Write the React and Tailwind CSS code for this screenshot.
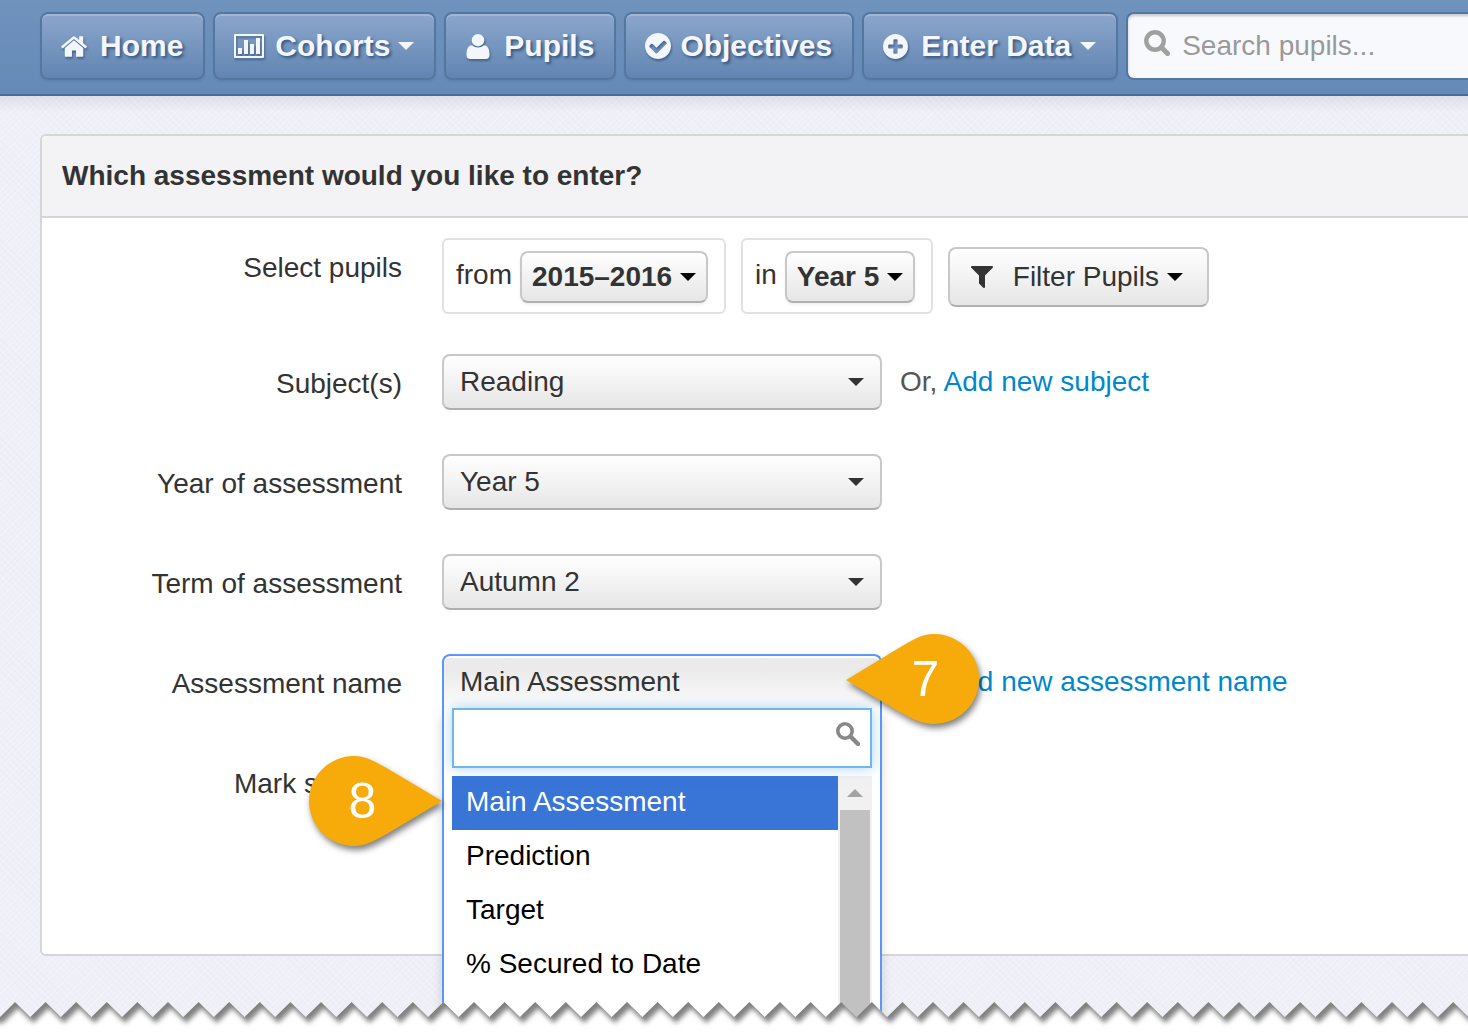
import React, { useState } from 'react';

const icons = {
  home: 'M1408 992v480q0 26-19 45t-45 19h-384v-384h-256v384h-384q-26 0-45-19t-19-45v-480q0-1 .5-3t.5-3l575-474 575 474q1 2 1 6zm223-69l-62 74q-8 9-21 11h-3q-13 0-21-7l-692-577-692 577q-12 8-24 7-13-2-21-11l-62-74q-8-10-7-23.5t11-21.5l719-599q32-26 76-26t76 26l244 204v-195q0-14 9-23t23-9h192q14 0 23 9t9 23v408l219 182q10 8 11 21.5t-7 23.5z',
  check: 'M1412 734q0-28-18-46l-91-90q-19-19-45-19t-45 19l-408 407-226-226q-19-19-45-19t-45 19l-91 90q-18 18-18 46 0 27 18 45l362 362q19 19 45 19 27 0 46-19l543-543q18-18 18-45zm252 162q0 209-103 385.5t-279.5 279.5-385.5 103-385.5-103-279.5-279.5-103-385.5 103-385.5 279.5-279.5 385.5-103 385.5 103 279.5 279.5 103 385.5z',
  plus: 'M1344 960v-128q0-26-19-45t-45-19h-256v-256q0-26-19-45t-45-19h-128q-26 0-45 19t-19 45v256h-256q-26 0-45 19t-19 45v128q0 26 19 45t45 19h256v256q0 26 19 45t45 19h128q26 0 45-19t19-45v-256h256q26 0 45-19t19-45zm320-64q0 209-103 385.5t-279.5 279.5-385.5 103-385.5-103-279.5-279.5-103-385.5 103-385.5 279.5-279.5 385.5-103 385.5 103 279.5 279.5 103 385.5z',
  filter: 'M1595 295q17 41-14 70l-493 493v742q0 42-39 59-13 5-25 5-27 0-45-19l-256-256q-19-18-19-45v-486l-493-493q-31-29-14-70 17-39 59-39h1280q42 0 59 39z',
};

const Icon = ({ name, box, className }) => (
  <svg viewBox={box} className={className} fill="currentColor" aria-hidden="true">
    <path d={icons[name]} />
  </svg>
);

const SearchIcon = ({ className }) => (
  <svg viewBox="0 0 26 26" className={className} fill="none" stroke="currentColor" aria-hidden="true">
    <circle cx="11" cy="11" r="8.700" strokeWidth="4.400" />
    <path d="M17.500 17.500L23.500 23.500" strokeWidth="5" strokeLinecap="round" />
  </svg>
);

const GlassIcon = ({ className }) => (
  <svg viewBox="0 0 24 24" className={className} fill="none" stroke="currentColor" aria-hidden="true">
    <circle cx="9" cy="9" r="7.200" strokeWidth="3.600" />
    <path d="M14.500 14.500L22 22" strokeWidth="4.400" strokeLinecap="round" />
  </svg>
);

const ChartIcon = () => (
  <svg viewBox="0 0 30 24" className="w-[30px] h-6 mr-[11px] drop-shadow-[1px_2px_1px_rgba(40,70,110,0.6)]" fill="currentColor" aria-hidden="true">
    <path fillRule="evenodd" d="M1 0h28q1 0 1 1v22q0 1-1 1H1q-1 0-1-1V1q0-1 1-1zM2 2v20h26V2z" />
    <path d="M4 14h4v6H4zM10 6h4v14h-4zM16 10h4v10h-4zM22 4h4v16h-4z" />
  </svg>
);

const UserIcon = () => (
  <svg viewBox="0 0 24 25" className="w-6 h-[25px] ml-px mr-[14px] drop-shadow-[1px_2px_1px_rgba(40,70,110,0.6)]" fill="currentColor" aria-hidden="true">
    <circle cx="12" cy="6.2" r="6.2" />
    <path d="M6 11.2C3 11.4 .5 14 .5 20v1.200Q.5 25 4.500 25h15q4 0 4-3.800V20c0-6-2.500-8.600-5.500-8.800Q15.500 13.600 12 13.600T6 11.200z" />
  </svg>
);

const Caret = ({ className = '' }) => (
  <span className={`w-0 h-0 border-x-8 border-x-transparent border-t-8 ${className}`} />
);

const NavButton = ({ children }) => (
  <button
    type="button"
    className="flex shrink-0 items-center h-[68px] pl-[19px] pr-5 rounded-lg border-2 border-[#54779f] bg-linear-to-b from-[#8ba6cc] to-[#6185b1] text-[30px] leading-none font-bold text-[#f3f7fc] shadow-[inset_0_2px_0_rgba(255,255,255,0.2),0_2px_2px_rgba(0,0,0,0.06)] [text-shadow:2px_2px_3px_rgba(40,70,110,0.8)]"
  >
    {children}
  </button>
);

const Header = () => (
  <header className="relative h-24 flex items-start gap-2 pl-10 pt-3 overflow-hidden border-b-2 border-[#466c9b] bg-linear-to-b from-[#7093bd] to-[#658ab7]">
    <nav className="flex gap-2 shrink-0">
      <NavButton>
        <Icon name="home" box="20 250 1624 1290" className="w-[26px] h-[21px] mr-[13px] drop-shadow-[1px_2px_1px_rgba(40,70,110,0.6)]" />
        Home
      </NavButton>
      <NavButton>
        <ChartIcon />
        Cohorts
        <Caret className="ml-2 border-t-[#f3f7fc]" />
      </NavButton>
      <NavButton>
        <UserIcon />
        Pupils
      </NavButton>
      <NavButton>
        <Icon name="check" box="128 128 1536 1536" className="w-[26px] h-[26px] mr-[9px] drop-shadow-[1px_2px_1px_rgba(40,70,110,0.6)]" />
        Objectives
      </NavButton>
      <NavButton>
        <Icon name="plus" box="128 128 1536 1536" className="w-[25px] h-[25px] mr-[13px] drop-shadow-[1px_2px_1px_rgba(40,70,110,0.6)]" />
        Enter Data
        <Caret className="ml-[9px] border-t-[#f3f7fc]" />
      </NavButton>
    </nav>
    <div className="relative grow min-w-[345px]">
      <SearchIcon className="absolute left-[18px] top-[18px] w-[26px] h-[26px] text-[#a0a0a0]" />
      <input
        type="text"
        aria-label="Search pupils"
        placeholder="Search pupils..."
        className="w-full h-[68px] pl-[54px] rounded-l-lg border-2 border-r-0 border-[#54779f] bg-[#f8f9fd] text-[28px] placeholder:text-[#999] outline-none shadow-[inset_0_2px_3px_rgba(0,0,0,0.2)]"
      />
    </div>
  </header>
);

const buttonLook = 'rounded-lg border-2 border-[#c8c8c8] border-b-[#b0b0b0] bg-linear-to-b from-white to-[#e6e6e6] text-[#333]';

const Select = ({ id, options, label }) => (
  <div className="relative w-[440px]">
    <select id={id} aria-label={label} className={`appearance-none w-full h-14 pl-4 text-[28px] ${buttonLook}`}>
      {options.map((option) => <option key={option}>{option}</option>)}
    </select>
    <Caret className="absolute right-[18px] top-6 pointer-events-none border-t-[#333]" />
  </div>
);

const SmallSelect = ({ id, text, label, options, width }) => (
  <div className="flex items-center gap-2 h-[76px] pl-3 pr-4 rounded-md border-2 border-[#e1e1e1]">
    <span className="pb-[2px]">{text}</span>
    <div className="relative">
      <select id={id} aria-label={label} className={`appearance-none block h-[52px] pl-[10px] mt-[2px] text-[28px] font-bold shadow-[0_2px_3px_rgba(0,0,0,0.06)] ${width} ${buttonLook}`}>
        {options.map((option) => <option key={option}>{option}</option>)}
      </select>
      <Caret className="absolute right-3 top-6 pointer-events-none border-t-black" />
    </div>
  </div>
);

const Row = ({ label, id, children }) => (
  <div className="flex items-start gap-10 mb-10">
    <label htmlFor={id} className="w-[360px] shrink-0 text-right leading-[60px]">{label}</label>
    {children}
  </div>
);

const Marker = ({ number, pointsLeft, className }) => (
  <div className={`absolute z-20 w-[133px] h-[90px] pointer-events-none ${className}`}>
    <svg viewBox="0 0 133 90" className="absolute inset-0 overflow-visible drop-shadow-[2px_4px_3px_rgba(0,0,0,0.5)]" fill="#f7ab0a" aria-hidden="true">
      {pointsLeft ? (
        <path d="M0 46L52 14.500C66 6 76 0 88 0A45 45 0 0 1 88 90C76 90 66 85 52 77z" />
      ) : (
        <path d="M133 45L81 14C67 6 57 0 45 0A45 45 0 0 0 45 90C57 90 67 84 81 76z" />
      )}
    </svg>
    <span className={`relative block text-center text-[50px] leading-[90px] text-white ${pointsLeft ? 'pl-[26px]' : 'pr-[26px]'}`}>{number}</span>
  </div>
);

const assessments = ['Main Assessment', 'Prediction', 'Target', '% Secured to Date'];

const AssessmentPicker = () => {
  const [selected, setSelected] = useState('Main Assessment');
  const [query, setQuery] = useState('');
  const visible = assessments.filter((name) => name.toLowerCase().includes(query.toLowerCase()));

  return (
    <div className="relative w-[440px]">
      <button
        id="assessment"
        type="button"
        aria-expanded="true"
        className="block w-full h-14 pl-4 pb-[3px] text-left rounded-t-lg border-2 border-b-0 border-[#5897fb] bg-linear-to-b from-[#ebebeb] from-30% to-white text-[#333] shadow-[inset_0_2px_0_#fff]"
      >
        {selected}
      </button>
      <div className="absolute z-10 left-0 top-[54px] w-full h-[420px] px-2 border-x-2 border-[#5897fb] bg-white shadow-[0_8px_10px_rgba(0,0,0,0.15)]">
        <div className="relative mb-2">
          <input
            type="text"
            aria-label="Search assessments"
            value={query}
            onChange={(e) => setQuery(e.target.value)}
            className="block w-full h-[60px] pl-3 pr-12 border-2 border-[#70b7ee] bg-white outline-none shadow-[0_0_12px_rgba(82,168,236,0.5)]"
          />
          <GlassIcon className="absolute right-3 top-[14px] w-6 h-6 text-[#888]" />
        </div>
        <div className="flex h-[350px]">
          <ul className="grow text-black">
            {visible.map((name) => (
              <li key={name}>
                <button
                  type="button"
                  onClick={() => setSelected(name)}
                  className={`block w-full h-[54px] pl-[14px] pb-[3px] text-left ${name === selected ? 'bg-[#3875d7] text-white' : ''}`}
                >
                  {name}
                </button>
              </li>
            ))}
          </ul>
          <div className="w-[34px] px-[2px] bg-[#f1f1f1]">
            <div className="h-[34px] flex items-center justify-center">
              <span className="w-0 h-0 border-x-8 border-x-transparent border-b-8 border-b-[#a3a3a3]" />
            </div>
            <div className="h-[316px] bg-[#c1c1c1]" />
          </div>
        </div>
      </div>
      <Marker number="7" pointsLeft className="left-[404px] -top-5" />
      <Marker number="8" className="-left-[133px] top-[102px]" />
    </div>
  );
};

const toothWidth = 30.6;
const toothCount = 100;

// zigzag running left to right, first peak at x = 15
const zigzag = Array.from({ length: toothCount }, (_, i) => {
  const peak = 15 + i * toothWidth;
  return `L${peak} 2L${peak + toothWidth / 2} 17`;
}).join('');

const TornEdge = () => (
  <svg className="absolute z-30 bottom-0 left-0 w-full h-8 pointer-events-none" aria-hidden="true">
    <defs>
      <clipPath id="paper">
        <path d={`M0 17${zigzag}V32H0z`} />
      </clipPath>
      <filter id="soft" x="-1%" y="-50%" width="102%" height="200%">
        <feGaussianBlur stdDeviation="2.500" />
      </filter>
    </defs>
    <g clipPath="url(#paper)">
      <rect width="100%" height="32" fill="#fff" />
      <path d={`M-30 -20V17L0 17${zigzag}V-20z`} transform="translate(3 6)" fill="#808080" filter="url(#soft)" />
    </g>
  </svg>
);

export default function App() {
  return (
    <div className="relative min-h-screen overflow-hidden bg-[#efeff8] bg-[repeating-linear-gradient(45deg,rgba(120,120,150,0.025)_0_1px,transparent_1px_5px),repeating-linear-gradient(-45deg,rgba(255,255,255,0.2)_0_1px,transparent_1px_4px)] font-['Liberation_Sans',Arial,sans-serif] text-[28px] leading-9 text-[#333]">
      <Header />
      <main className="pl-10 pt-[38px] bg-[linear-gradient(to_bottom,rgba(100,100,130,0.12),transparent_16px)]">
        <section className="rounded-l-md border-2 border-r-0 border-[#d6d6d6] bg-white">
          <h1 className="h-[82px] pl-5 rounded-tl-md border-b-2 border-[#d6d6d6] bg-[#f3f3f5] font-bold leading-[80px]">
            Which assessment would you like to enter?
          </h1>
          <form className="pt-5 pb-25">
            <Row label="Select pupils" id="school-year">
              <div className="flex items-center gap-[15px]">
                <SmallSelect id="school-year" text="from" options={['2015–2016']} width="w-[188px]" />
                <SmallSelect text="in" label="Year group" options={['Year 5']} width="w-[130px]" />
                <button type="button" className={`flex items-center h-[60px] mt-[2px] pl-[21px] pr-6 ${buttonLook}`}>
                  <Icon name="filter" box="192 256 1408 1408" className="w-[22px] h-[22px] mr-5" />
                  Filter Pupils
                  <Caret className="ml-2 border-t-black" />
                </button>
              </div>
            </Row>
            <Row label="Subject(s)" id="subject">
              <div className="flex items-center gap-[18px]">
                <Select id="subject" options={['Reading']} />
                <p className="text-[#555]">Or, <a href="#subject" className="text-[#0088cc]">Add new subject</a></p>
              </div>
            </Row>
            <Row label="Year of assessment" id="year">
              <Select id="year" options={['Year 5']} />
            </Row>
            <Row label="Term of assessment" id="term">
              <Select id="term" options={['Autumn 2']} />
            </Row>
            <Row label="Assessment name" id="assessment">
              <div className="flex items-center gap-[18px]">
                <AssessmentPicker />
                <p className="text-[#555]">Or, <a href="#assessment" className="text-[#0088cc]">Add new assessment name</a></p>
              </div>
            </Row>
            <Row label="Mark scheme" id="scheme">
              <Select id="scheme" options={['']} />
            </Row>
          </form>
        </section>
      </main>
      <TornEdge />
    </div>
  );
}
